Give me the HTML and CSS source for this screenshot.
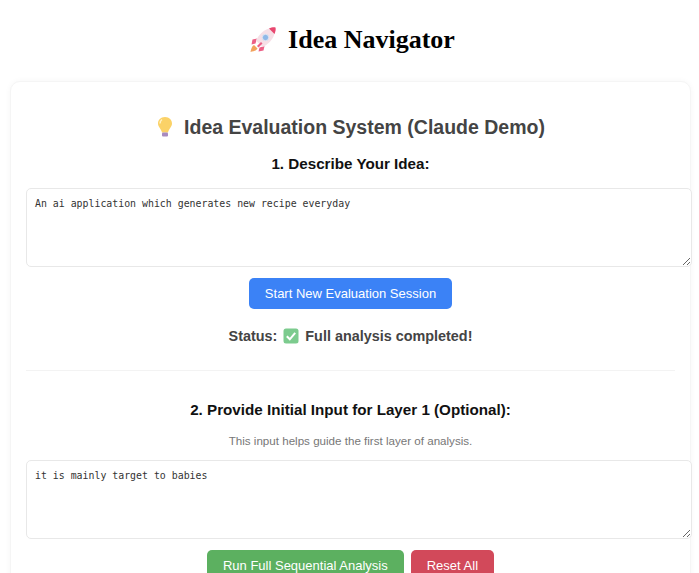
FILE: index.html
```html
<!DOCTYPE html>
<html lang="en">
<head>
    <meta charset="UTF-8">
    <meta name="viewport" content="width=device-width, initial-scale=1.0">
    <title>Idea Navigator</title>
    <link rel="stylesheet" href="styles.css">
</head>
<body>
    <header class="page-header">
        <h1>
            <svg class="icon-rocket" viewBox="0 0 28 28" aria-hidden="true">
                <path d="M5 19c-2 1-3 4-3.500 7 3-.5 6-1.500 7-3.500z" fill="#f2a25c"/>
                <path d="M8 12.500l-4.500 1-1 5 4-1z" fill="#ec5f86"/>
                <path d="M15.500 20l-1 4.500-5 1 1-4z" fill="#ec5f86"/>
                <path d="M7 14.500C9.500 9 14.500 4 20 2.500l5.500 0c0 1 0 4 0 5.500-1.500 5.500-6.500 10.500-12 13z" fill="#f6dfe6"/>
                <path d="M20 2.500c2-1 5-1.500 6.500-1 .5 1.500 0 4.500-1 6.500z" fill="#e8476f"/>
                <circle cx="16.500" cy="11.500" r="3.200" fill="#8fb8e8" stroke="#dfe7f2" stroke-width="1"/>
                <path d="M8 20l4-4 1.500 1.500-4 4z" fill="#ec5f86"/>
            </svg>
            <span>Idea Navigator</span>
        </h1>
    </header>

    <main class="card">
        <h2>
            <svg class="icon-bulb" viewBox="0 0 18 22" aria-hidden="true">
                <path d="M9 1C4.500 1 2 4 2 7.500c0 3.500 3 5 4 9h6c1-4 4-5.500 4-9C16 4 13.500 1 9 1z" fill="#fbd267"/>
                <path d="M6 3.500C4.500 4.500 4 6 4 7.500" stroke="#fff2c4" stroke-width="1.500" fill="none"/>
                <rect x="6" y="16.500" width="6" height="4" rx="1" fill="#a88bc0"/>
            </svg>
            <span>Idea Evaluation System (Claude Demo)</span>
        </h2>

        <h3>1. Describe Your Idea:</h3>
        <textarea class="input-box" rows="4">An ai application which generates new recipe everyday</textarea>
        <div class="button-row">
            <button class="btn btn-blue">Start New Evaluation Session</button>
        </div>
        <p class="status">
            <span>Status:</span>
            <svg class="icon-check" viewBox="0 0 16 16" aria-hidden="true">
                <rect x="0.500" y="0.500" width="15" height="15" rx="2.500" fill="#7ccb8e"/>
                <path d="M3.800 8.300l3 3 5.400-6.400" stroke="#fff" stroke-width="2" fill="none"/>
            </svg>
            <span>Full analysis completed!</span>
        </p>

        <hr class="divider">

        <h3 class="second-step">2. Provide Initial Input for Layer 1 (Optional):</h3>
        <p class="hint">This input helps guide the first layer of analysis.</p>
        <textarea class="input-box" rows="4">it is mainly target to babies</textarea>
        <div class="button-row">
            <button class="btn btn-green">Run Full Sequential Analysis</button>
            <button class="btn btn-red">Reset All</button>
        </div>
    </main>
</body>
</html>
```

FILE: styles.css
```css
html, body {
    height: 573px;
    overflow: hidden;
}
body {
    font-family: "Liberation Sans", Arial, sans-serif;
    margin: 0;
    padding: 0 8px 0 10px;
    background-color: #fff;
}
.page-header {
    height: 81px;
}
h1 {
    font-family: "Liberation Serif", "Times New Roman", serif;
    font-size: 26px;
    font-weight: bold;
    color: #000;
    margin: 0;
    padding: 24px 0 0 3px;
    display: flex;
    justify-content: center;
    align-items: center;
    gap: 11px;
    line-height: 32px;
}
.icon-rocket {
    width: 28px;
    height: 28px;
}
.card {
    background-color: #fff;
    border: 1px solid #f5f5f5;
    border-radius: 10px;
    box-shadow: 0 0 6px rgba(0, 0, 0, 0.04);
    padding: 0 15px;
    height: 520px;
    box-sizing: border-box;
}
h2 {
    font-size: 19.500px;
    color: #444;
    margin: 32px 0 0;
    display: flex;
    justify-content: center;
    align-items: center;
    gap: 10px;
    line-height: 26px;
}
.icon-bulb {
    width: 18px;
    height: 22px;
}
h3 {
    font-size: 15.200px;
    color: #111;
    text-align: center;
    margin: 15px 0;
    line-height: 18px;
}
.input-box {
    display: block;
    width: 648px;
    height: 61px;
    padding: 8px;
    border: 1px solid #e8e8e8;
    border-radius: 5px;
    font-family: "DejaVu Sans Mono", monospace;
    font-size: 9.900px;
    line-height: 13px;
    color: #333;
    background-color: #fff;
    outline: none;
}
.button-row {
    display: flex;
    justify-content: center;
    gap: 7px;
    margin-top: 11px;
}
.btn {
    border: none;
    border-radius: 5px;
    color: #fff;
    font-family: inherit;
    font-size: 13px;
    height: 31px;
    padding: 0 16px;
    cursor: pointer;
}
.btn-blue {
    background-color: #3b82f6;
}
.btn-green {
    background-color: #5cb060;
}
.btn-red {
    background-color: #d2495a;
}
.status {
    font-size: 14.400px;
    font-weight: bold;
    color: #444;
    margin: 18px 0 0;
    line-height: 18px;
    display: flex;
    justify-content: center;
    align-items: center;
    gap: 6px;
}
.icon-check {
    width: 16px;
    height: 16px;
}
.divider {
    border: none;
    border-top: 1px solid #f3f3f3;
    margin: 25px 0 0;
}
.second-step {
    margin: 30px 0 0;
}
.hint {
    font-size: 11.600px;
    color: #777;
    text-align: center;
    margin: 15px 0 12px;
    line-height: 14px;
}
```
